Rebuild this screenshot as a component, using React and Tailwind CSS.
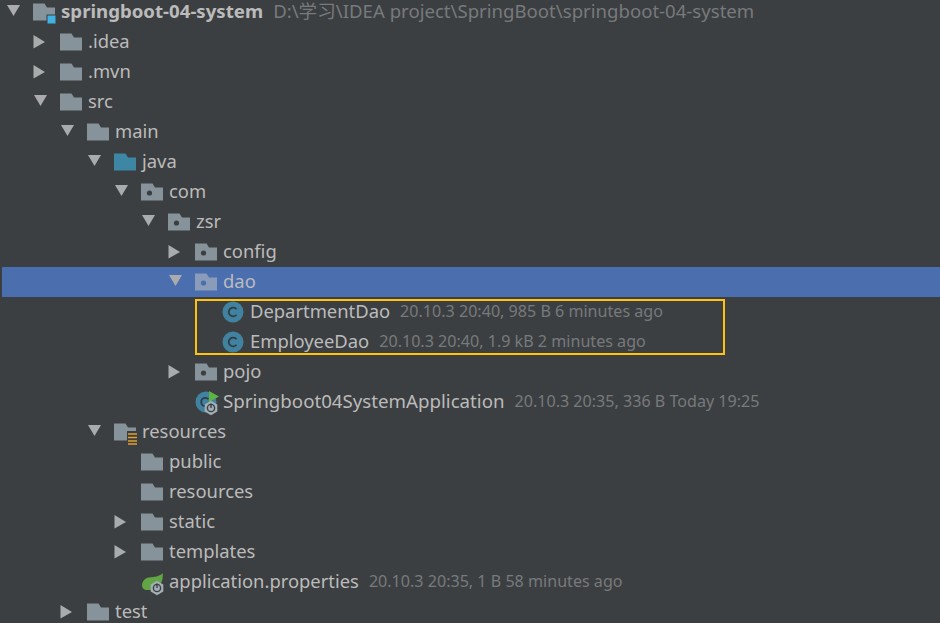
import React from "react";

const rows = [
  { depth: 0, arrow: "down", icon: "module", name: "springboot-04-system", bold: true, meta: "D:\\学习\\IDEA project\\SpringBoot\\springboot-04-system", bigMeta: true },
  { depth: 1, arrow: "right", icon: "folder", name: ".idea" },
  { depth: 1, arrow: "right", icon: "folder", name: ".mvn" },
  { depth: 1, arrow: "down", icon: "folder", name: "src" },
  { depth: 2, arrow: "down", icon: "folder", name: "main" },
  { depth: 3, arrow: "down", icon: "source", name: "java" },
  { depth: 4, arrow: "down", icon: "package", name: "com" },
  { depth: 5, arrow: "down", icon: "package", name: "zsr" },
  { depth: 6, arrow: "right", icon: "package", name: "config" },
  { depth: 6, arrow: "down", icon: "package", name: "dao", selected: true },
  { depth: 7, icon: "class", name: "DepartmentDao", meta: "20.10.3 20:40, 985 B 6 minutes ago" },
  { depth: 7, icon: "class", name: "EmployeeDao", meta: "20.10.3 20:40, 1.9 kB 2 minutes ago" },
  { depth: 6, arrow: "right", icon: "package", name: "pojo" },
  { depth: 6, icon: "boot", name: "Springboot04SystemApplication", wide: true, meta: "20.10.3 20:35, 336 B Today 19:25" },
  { depth: 3, arrow: "down", icon: "resources", name: "resources" },
  { depth: 4, icon: "folder", name: "public" },
  { depth: 4, icon: "folder", name: "resources" },
  { depth: 4, arrow: "right", icon: "folder", name: "static" },
  { depth: 4, arrow: "right", icon: "folder", name: "templates" },
  { depth: 4, icon: "spring", name: "application.properties", meta: "20.10.3 20:35, 1 B 58 minutes ago" },
  { depth: 2, arrow: "right", icon: "folder", name: "test" },
];

const FOLDER = "M0 0.5H11.5L14 4.5H22V17.5H0Z";

const Arrow = ({ dir }) => (
  <svg width="27" height="30" viewBox="0 0 27 30" className="shrink-0">
    {dir === "down" ? (
      <path d="M1 8H14L7.5 19Z" fill="#a9abad" />
    ) : (
      <path d="M0.5 8V21.5L12 15Z" fill="#a9abad" />
    )}
  </svg>
);

// small grey hexagon with a power symbol, sits on the boot/spring icons
const Gear = ({ cx, cy }) => (
  <g>
    <path
      d={`M${cx} ${cy - 7.2}L${cx + 6.3} ${cy - 3.6}V${cy + 3.6}L${cx} ${cy + 7.2}L${cx - 6.3} ${cy + 3.6}V${cy - 3.6}Z`}
      fill="#a3afb7"
    />
    <circle cx={cx} cy={cy} r="3.6" fill="none" stroke="#3c3f41" strokeWidth="1.4" />
    <path d={`M${cx} ${cy - 4.5}V${cy}`} stroke="#3c3f41" strokeWidth="1.4" />
  </g>
);

const Icon = ({ type, selected }) => {
  const folderFill = selected ? "#8a9cb9" : "#87939a";
  const dot = selected ? "#4b6eaf" : "#3c3f41";
  return (
    <svg width="28" height="30" viewBox="0 0 28 30" className="shrink-0">
      {type === "class" && (
        <g>
          <circle cx="11" cy="15" r="10.5" fill="#40829f" />
          <path d="M14.5 12.2A4.4 4.4 0 1 0 14.5 17.8" fill="none" stroke="#2f3d45" strokeWidth="1.8" />
        </g>
      )}
      {type === "boot" && (
        <g>
          <circle cx="11" cy="15" r="10.5" fill="#40829f" />
          <path d="M13.5 12.2A4.2 4.2 0 1 0 13.5 17.8" fill="none" stroke="#2f3d45" strokeWidth="1.8" />
          <path d="M14 4L24 9.5L14 15Z" fill="#5fb344" />
          <Gear cx={16} cy={21} />
        </g>
      )}
      {type === "spring" && (
        <g>
          <path d="M1 18C1.5 14 4 11 8 10.5C13 10 19 9.5 21.7 6C22 10 21.5 14 20 16L12 23H6C3 23 1 21 1 18Z" fill="#62a544" />
          <Gear cx={16} cy={21} />
        </g>
      )}
      {(type === "folder" || type === "package" || type === "module" || type === "resources" || type === "source") && (
        <g transform="translate(0 6)">
          <path d={FOLDER} fill={type === "source" ? "#3d87a5" : folderFill} />
          {type === "package" && <circle cx="8.5" cy="10" r="2.6" fill={dot} />}
        </g>
      )}
      {type === "module" && <rect x="14" y="18" width="9" height="9" fill="#3fb1e3" stroke="#3c3f41" />}
      {type === "resources" && (
        <g>
          <rect x="13" y="14" width="11" height="15" fill="#3c3f41" />
          <path d="M14 17H23M14 20.5H23M14 24H23M14 27H23" stroke="#e0a030" strokeWidth="1.6" />
        </g>
      )}
    </svg>
  );
};

const Row = ({ row }) => {
  let nameSize = "text-[18.4px]";
  if (row.bold) nameSize = "text-[18.65px] font-bold";
  if (row.wide) nameSize = "text-[18.7px]";

  return (
    <div
      className={`flex h-[30px] items-center whitespace-nowrap ${row.selected ? "ml-[2px] bg-[#4b6eaf]" : ""}`}
      style={{ paddingLeft: 6 + 27 * row.depth - (row.selected ? 2 : 0) }}
    >
      {row.arrow ? <Arrow dir={row.arrow} /> : <div className="w-[27px] shrink-0" />}
      <Icon type={row.icon} selected={row.selected} />
      <span className={`mb-[2px] leading-[22px] text-[#bbbbbb] ${nameSize}`}>{row.name}</span>
      {row.meta && (
        <span className={`mb-[2px] ml-[10px] leading-[22px] text-[#777a7c] ${row.bigMeta ? "text-[18.6px]" : "text-[16.1px]"}`}>
          {row.meta}
        </span>
      )}
    </div>
  );
};

export default function App() {
  return (
    <div className="relative h-[623px] w-[940px] overflow-hidden bg-[#3c3f41] font-['Noto_Sans','Noto_Sans_CJK_SC',sans-serif]">
      <div className="mt-[-3px]">
        {rows.map((row, i) => (
          <Row key={i} row={row} />
        ))}
      </div>
      {/* yellow annotation box around the two dao files */}
      <div className="absolute left-[195px] top-[299px] h-[56px] w-[530px] border-2 border-[#ffc20e]" />
    </div>
  );
}
